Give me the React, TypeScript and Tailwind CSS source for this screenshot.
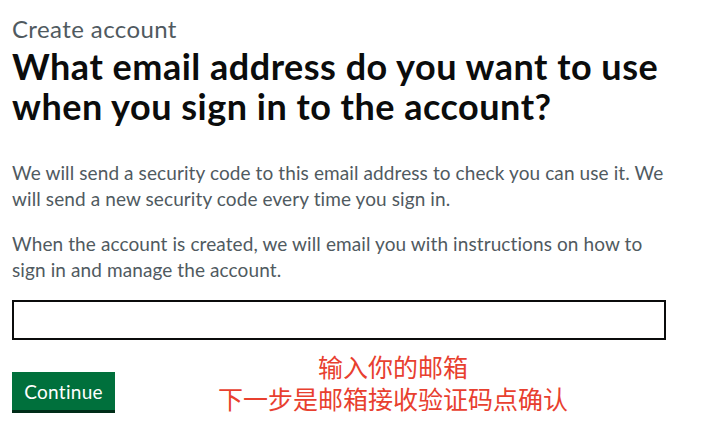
import React from 'react';

const EmailStep: React.FC = () => {
  return (
    <div className="min-h-screen bg-white px-3 pt-[14px] font-['Lato','Noto_Sans',sans-serif] text-[#0b0c0c]">
      <span className="block text-[24px] leading-[30px] tracking-[0.4px] text-[#505a5f]">Create account</span>
      <h1 className="mt-[2px] mb-[34px] text-[36px] font-bold leading-[40px] tracking-[0.5px]">
        What email address do you want to use when you sign in to the account?
      </h1>

      <div className="w-[656px] text-[19px] leading-[26px] tracking-[0.1px] text-[#505a5f]">
        <p className="mb-[19px]">
          We will send a security code to this email address to check you can use it. We will send a new
          security code every time you sign in.
        </p>
        <p className="mb-[17px]">
          When the account is created, we will email you with instructions on how to sign in and manage
          the account.
        </p>
      </div>

      <input
        type="email"
        className="block h-[40px] w-[654px] border-2 border-[#0b0c0c] bg-white px-1 text-[19px] outline-none"
      />

      <div className="mt-[10px] flex items-start">
        <button className="mt-[22px] h-[38px] w-[103px] bg-[#00703c] text-[19px] leading-none tracking-[0.3px] text-white shadow-[0_3px_0_#002d18]">
          Continue
        </button>
        <div className="ml-[103px] text-center font-['Noto_Sans_CJK_SC',sans-serif] text-[25px] leading-[32px] text-[#e8402f]">
          <div>输入你的邮箱</div>
          <div>下一步是邮箱接收验证码点确认</div>
        </div>
      </div>
    </div>
  );
};

export default function App() {
  return <EmailStep />;
}
